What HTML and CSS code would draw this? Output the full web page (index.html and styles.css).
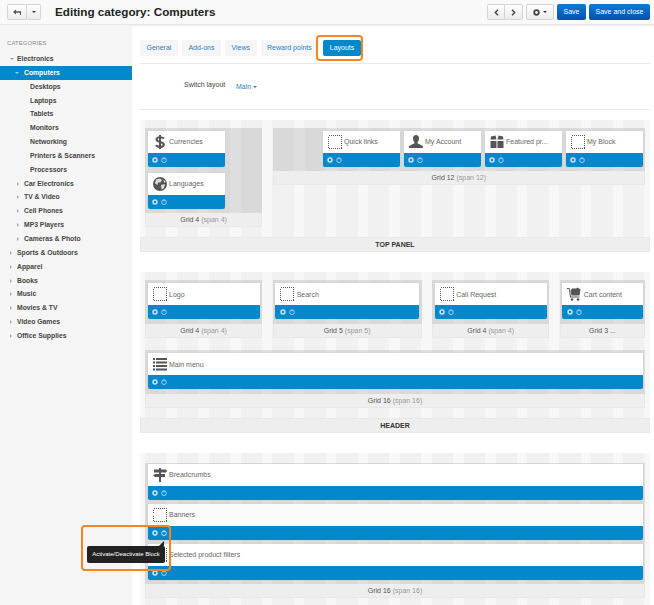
FILE: index.html
```html
<!DOCTYPE html>
<html lang="en">
<head>
    <meta charset="UTF-8">
    <meta name="viewport" content="width=device-width, initial-scale=1.0">
    <title>Editing category: Computers</title>
    <link rel="stylesheet" href="styles.css">
</head>
<body>
<svg class="sprite" width="0" height="0">
    <symbol id="i-empty" viewBox="0 0 14 14"><rect x=".5" y=".5" width="13" height="13" fill="none" stroke="#555" stroke-width="1" stroke-dasharray="1 1" shape-rendering="crispEdges"/></symbol>
    <symbol id="i-dollar" viewBox="0 0 14 14"><path d="M11 3.6C10 2.6 8.6 2.2 7 2.2 4.9 2.2 3.5 3.1 3.5 4.6 3.5 7.6 10.8 6.2 10.8 9.5 10.8 11 9.2 11.9 7 11.9 5.3 11.9 3.9 11.3 2.9 10.3" fill="none" stroke="#555" stroke-width="2.1"/><rect x="6" y="0" width="2" height="14" fill="#555"/></symbol>
    <symbol id="i-globe" viewBox="0 0 14 14"><circle cx="7" cy="7" r="7" fill="#555"/><path d="M3 2.5 7 1.5 9 3 7.5 5.5 5 5.5 4.5 8 2 6.5ZM8 8 12 7 11 11 8.5 12.5ZM10.500 2.500 13 5 11 5.500Z" fill="#ddd"/></symbol>
    <symbol id="i-user" viewBox="0 0 14 14"><path d="M7 0C5 0 4 1.500 4 3.500 4 5.200 4.800 6.500 5.500 7.200V8.300L1 10.500C.3 10.900 0 11.500 0 13H14C14 11.500 13.700 10.900 13 10.500L8.500 8.300V7.200C9.200 6.500 10 5.200 10 3.500 10 1.500 9 0 7 0Z" fill="#555"/></symbol>
    <symbol id="i-gift" viewBox="0 0 14 14"><path d="M1 1.500 5.500.5 6.500 4.500H.5ZM7.500 4.500 8.500.5 13 1.500 13.500 4.500ZM.5 6H6.500V13H.5ZM7.500 6H13.500V13H7.500Z" fill="#555"/></symbol>
    <symbol id="i-list" viewBox="0 0 14 14"><path d="M0 1H2V3H0ZM3 1H14V3H3ZM0 4.500H2V6.500H0ZM3 4.500H14V6.500H3ZM0 8H2V10H0ZM3 8H14V10H3ZM0 11.500H2V13.500H0ZM3 11.500H14V13.500H3Z" fill="#555"/></symbol>
    <symbol id="i-cart" viewBox="0 0 14 14"><path d="M0 1H2.500L4 9.500H12.500V10.500H3L1.800 2H0Z" fill="#555"/><path d="M3.500 3.500 5 1.500H9L10.500 .5 13.500 2.500 12.500 8.500H4.500Z" fill="#555"/><circle cx="5" cy="12.500" r="1.300" fill="#555"/><circle cx="11" cy="12.500" r="1.300" fill="#555"/></symbol>
    <symbol id="i-sign" viewBox="0 0 14 14"><path d="M6 0H8V1.500H13L14 3 13 4.500H8V6H12V9H8V14H6V9H2L0 7.500 2 6H6V4.500H1V1.500H6Z" fill="#555"/></symbol>
    <symbol id="i-gear" viewBox="0 0 8 8"><circle cx="4" cy="4" r="2.600" fill="none" stroke="currentColor" stroke-width="2"/></symbol>
    <symbol id="i-power" viewBox="0 0 8 8"><circle cx="4" cy="4.300" r="3.100" fill="none" stroke="currentColor" stroke-width="1"/><path d="M4 .5V3" stroke="currentColor" stroke-width="1"/></symbol>
</svg>

<header class="topbar">
    <div class="btn-group">
        <span class="btn btn-back"><svg width="10" height="7" viewBox="0 0 10 7"><path d="M4 .5 1 3 4 5.500V3.800H8V6H9V2.300H4Z" fill="#555"/></svg></span>
        <span class="btn btn-caret"><i class="caret"></i></span>
    </div>
    <h1>Editing category: Computers</h1>
    <div class="topbar-right">
        <div class="btn-group">
            <span class="btn btn-arrow"><svg width="5" height="7" viewBox="0 0 5 7"><path d="M4 .8 1.300 3.500 4 6.200" fill="none" stroke="#444" stroke-width="1.400"/></svg></span>
            <span class="btn btn-arrow"><svg width="5" height="7" viewBox="0 0 5 7"><path d="M1 .8 3.700 3.500 1 6.200" fill="none" stroke="#444" stroke-width="1.400"/></svg></span>
        </div>
        <span class="btn btn-cog"><svg width="7" height="7" viewBox="0 0 8 8"><use href="#i-gear"/></svg><i class="caret"></i></span>
        <span class="btn-save">Save</span>
        <span class="btn-save btn-save-close">Save and close</span>
    </div>
</header>

<div class="page">
    <aside class="sidebar">
        <h4>Categories</h4>
        <ul class="tree">
            <li class="lvl1"><i class="arr-open"></i>Electronics</li>
            <li class="lvl2 active"><i class="arr-open"></i>Computers</li>
            <li class="lvl3">Desktops</li>
            <li class="lvl3">Laptops</li>
            <li class="lvl3">Tablets</li>
            <li class="lvl3">Monitors</li>
            <li class="lvl3">Networking</li>
            <li class="lvl3">Printers &amp; Scanners</li>
            <li class="lvl3">Processors</li>
            <li class="lvl2"><i class="arr"></i>Car Electronics</li>
            <li class="lvl2"><i class="arr"></i>TV &amp; Video</li>
            <li class="lvl2"><i class="arr"></i>Cell Phones</li>
            <li class="lvl2"><i class="arr"></i>MP3 Players</li>
            <li class="lvl2"><i class="arr"></i>Cameras &amp; Photo</li>
            <li class="lvl1"><i class="arr"></i>Sports &amp; Outdoors</li>
            <li class="lvl1"><i class="arr"></i>Apparel</li>
            <li class="lvl1"><i class="arr"></i>Books</li>
            <li class="lvl1"><i class="arr"></i>Music</li>
            <li class="lvl1"><i class="arr"></i>Movies &amp; TV</li>
            <li class="lvl1"><i class="arr"></i>Video Games</li>
            <li class="lvl1"><i class="arr"></i>Office Supplies</li>
        </ul>
    </aside>

    <main class="content">
        <nav class="tabs">
            <span class="tab">General</span>
            <span class="tab">Add-ons</span>
            <span class="tab">Views</span>
            <span class="tab">Reward points</span>
            <span class="tab tab-active">Layouts</span>
        </nav>
        <div class="switch">
            <span class="switch-label">Switch layout</span>
            <span class="switch-value">Main<i class="caret"></i></span>
        </div>

        <section class="container">
            <div class="rows">
                <div class="grid span4">
                    <div class="grid-body">
                        <div class="block">
                            <div class="block-head"><svg class="ico"><use href="#i-dollar"/></svg><span>Currencies</span></div>
                            <div class="block-bar"><svg><use href="#i-gear"/></svg><svg><use href="#i-power"/></svg></div>
                        </div>
                        <div class="block">
                            <div class="block-head"><svg class="ico"><use href="#i-globe"/></svg><span>Languages</span></div>
                            <div class="block-bar"><svg><use href="#i-gear"/></svg><svg><use href="#i-power"/></svg></div>
                        </div>
                    </div>
                    <div class="grid-foot">Grid 4 <em>(span 4)</em></div>
                </div>
                <div class="grid span12 grid-short">
                    <div class="grid-body grid-body-right">
                        <div class="block">
                            <div class="block-head"><svg class="ico"><use href="#i-empty"/></svg><span>Quick links</span></div>
                            <div class="block-bar"><svg><use href="#i-gear"/></svg><svg><use href="#i-power"/></svg></div>
                        </div>
                        <div class="block">
                            <div class="block-head"><svg class="ico"><use href="#i-user"/></svg><span>My Account</span></div>
                            <div class="block-bar"><svg><use href="#i-gear"/></svg><svg><use href="#i-power"/></svg></div>
                        </div>
                        <div class="block">
                            <div class="block-head"><svg class="ico"><use href="#i-gift"/></svg><span>Featured pr...</span></div>
                            <div class="block-bar"><svg><use href="#i-gear"/></svg><svg><use href="#i-power"/></svg></div>
                        </div>
                        <div class="block">
                            <div class="block-head"><svg class="ico"><use href="#i-empty"/></svg><span>My Block</span></div>
                            <div class="block-bar"><svg><use href="#i-gear"/></svg><svg><use href="#i-power"/></svg></div>
                        </div>
                    </div>
                    <div class="grid-foot">Grid 12 <em>(span 12)</em></div>
                </div>
            </div>
            <div class="container-title">TOP PANEL</div>
        </section>

        <section class="container">
            <div class="rows">
                <div class="grid span4">
                    <div class="grid-body">
                        <div class="block block-full">
                            <div class="block-head"><svg class="ico"><use href="#i-empty"/></svg><span>Logo</span></div>
                            <div class="block-bar"><svg><use href="#i-gear"/></svg><svg><use href="#i-power"/></svg></div>
                        </div>
                    </div>
                    <div class="grid-foot">Grid 4 <em>(span 4)</em></div>
                </div>
                <div class="grid span5">
                    <div class="grid-body">
                        <div class="block block-full">
                            <div class="block-head"><svg class="ico"><use href="#i-empty"/></svg><span>Search</span></div>
                            <div class="block-bar"><svg><use href="#i-gear"/></svg><svg><use href="#i-power"/></svg></div>
                        </div>
                    </div>
                    <div class="grid-foot">Grid 5 <em>(span 5)</em></div>
                </div>
                <div class="grid span4">
                    <div class="grid-body">
                        <div class="block block-full">
                            <div class="block-head"><svg class="ico"><use href="#i-empty"/></svg><span>Call Request</span></div>
                            <div class="block-bar"><svg><use href="#i-gear"/></svg><svg><use href="#i-power"/></svg></div>
                        </div>
                    </div>
                    <div class="grid-foot">Grid 4 <em>(span 4)</em></div>
                </div>
                <div class="grid span3">
                    <div class="grid-body">
                        <div class="block block-full">
                            <div class="block-head"><svg class="ico"><use href="#i-cart"/></svg><span>Cart content</span></div>
                            <div class="block-bar"><svg><use href="#i-gear"/></svg><svg><use href="#i-power"/></svg></div>
                        </div>
                    </div>
                    <div class="grid-foot">Grid 3 ...</div>
                </div>
                <div class="grid span16">
                    <div class="grid-body">
                        <div class="block block-full">
                            <div class="block-head"><svg class="ico"><use href="#i-list"/></svg><span>Main menu</span></div>
                            <div class="block-bar"><svg><use href="#i-gear"/></svg><svg><use href="#i-power"/></svg></div>
                        </div>
                    </div>
                    <div class="grid-foot">Grid 16 <em>(span 16)</em></div>
                </div>
            </div>
            <div class="container-title">HEADER</div>
        </section>

        <section class="container container-last">
            <div class="rows">
                <div class="grid span16">
                    <div class="grid-body">
                        <div class="block block-full">
                            <div class="block-head"><svg class="ico"><use href="#i-sign"/></svg><span>Breadcrumbs</span></div>
                            <div class="block-bar"><svg><use href="#i-gear"/></svg><svg><use href="#i-power"/></svg></div>
                        </div>
                        <div class="block block-full block-hover">
                            <div class="block-head"><svg class="ico"><use href="#i-empty"/></svg><span>Banners</span></div>
                            <div class="block-bar"><svg><use href="#i-gear"/></svg><svg class="on"><use href="#i-power"/></svg></div>
                        </div>
                        <div class="block block-full">
                            <div class="block-head"><svg class="ico"><use href="#i-empty"/></svg><span>Selected product filters</span></div>
                            <div class="block-bar"><svg><use href="#i-gear"/></svg><svg><use href="#i-power"/></svg></div>
                        </div>
                    </div>
                    <div class="grid-foot">Grid 16 <em>(span 16)</em></div>
                </div>
            </div>
        </section>
    </main>
</div>

<!-- callouts drawn over the screenshot -->
<div class="callout callout-tab"></div>
<div class="tooltip">Activate/Deactivate Block</div>
<div class="callout callout-tip"></div>
</body>
</html>
```

FILE: styles.css
```css
*{
    margin: 0;
    padding: 0;
    box-sizing: border-box;
}
html,body{
    width: 654px;
    height: 605px;
    overflow: hidden;
}
body{
    position: relative;
    background: #fff;
    font-family: "Liberation Sans", Arial, sans-serif;
    font-size: 7px;
    color: #555;
}
.sprite{
    position: absolute;
}
ul{
    list-style: none;
}
em{
    font-style: normal;
    color: #999;
}

/* top bar */
.topbar{
    height: 25px;
    padding: 4px 4px 0 7px;
    display: flex;
    align-items: flex-start;
    background: #f9f9f9;
    border-bottom: 1px solid #e6e6e6;
    box-shadow: 0 1px 1px #eee;
}
.topbar h1{
    margin-left: 14px;
    font-size: 11.700px;
    line-height: 16px;
    color: #222;
}
.topbar-right{
    margin-left: auto;
    display: flex;
    gap: 3px;
}
.btn-group{
    display: flex;
}
.btn{
    height: 16px;
    display: flex;
    align-items: center;
    justify-content: center;
    background: linear-gradient(#fdfdfd, #ececec);
    border: 1px solid #d4d4d4;
    border-radius: 2px;
    color: #444;
}
.btn-group .btn:first-child{
    border-radius: 2px 0 0 2px;
}
.btn-group .btn:last-child{
    border-left: 0;
    border-radius: 0 2px 2px 0;
}
.btn-back{
    width: 20px;
}
.btn-caret{
    width: 14px;
}
.btn-arrow{
    width: 18px;
}
.btn-cog{
    width: 28px;
    gap: 3px;
}
.caret{
    display: inline-block;
    width: 0;
    height: 0;
    border-left: 2.500px solid transparent;
    border-right: 2.500px solid transparent;
    border-top: 2.500px solid #333;
}
.btn-save{
    width: 29px;
    height: 16px;
    line-height: 16px;
    text-align: center;
    color: #fff;
    background: linear-gradient(#0a7ad8, #0351ab);
    border-radius: 2px;
}
.btn-save-close{
    width: 61px;
}

/* page */
.page{
    display: flex;
    height: 580px;
}
.sidebar{
    width: 132px;
    flex-shrink: 0;
    padding-top: 14px;
    background: #f5f5f5;
}
.sidebar h4{
    padding-left: 7px;
    font-size: 5.800px;
    font-weight: normal;
    line-height: 8px;
    color: #888;
    text-transform: uppercase;
    letter-spacing: .2px;
}
.tree{
    margin-top: 5px;
}
.tree li{
    position: relative;
    height: 13.850px;
    line-height: 13.850px;
    font-size: 6.800px;
    font-weight: bold;
    color: #444;
}
.lvl1{
    padding-left: 17px;
}
.lvl2{
    padding-left: 24px;
}
.lvl3{
    padding-left: 30px;
}
.tree .active{
    background: #0388cc;
    color: #fff;
}
.arr,.arr-open{
    position: absolute;
    top: 5px;
    width: 0;
    height: 0;
}
.lvl1 i{
    left: 10px;
}
.lvl2 i{
    left: 17px;
}
.arr{
    border-top: 2px solid transparent;
    border-bottom: 2px solid transparent;
    border-left: 2.500px solid #aaa;
}
.arr-open{
    top: 6px;
    left: 8px;
    border-left: 2.500px solid transparent;
    border-right: 2.500px solid transparent;
    border-top: 2.500px solid #999;
}
.lvl2 .arr-open{
    left: 15px;
}
.active .arr-open{
    border-top-color: #9cd0ec;
}

/* tabs */
.content{
    flex: 1;
    padding: 15px 4px 0 8px;
}
.tabs{
    display: flex;
    gap: 4px;
    height: 24px;
    border-bottom: 1px solid #e8e8e8;
}
.tab{
    height: 16px;
    padding: 0 6.500px;
    line-height: 16px;
    background: #f5f5f5;
    border-radius: 2px;
    color: #2b7fbe;
}
.tab-active{
    margin-left: 1px;
    background: #0388cc;
    color: #fff;
}
.switch{
    height: 46px;
    padding: 16px 0 0 44px;
    display: flex;
    align-items: flex-start;
    border-bottom: 1px solid #e8e8e8;
}
.switch-label{
    width: 52px;
    line-height: 9px;
    color: #444;
}
.switch-value{
    margin-top: 2px;
    line-height: 9px;
    color: #2b7fbe;
}
.switch-value .caret{
    margin-left: 2px;
    vertical-align: middle;
    border-top-color: #2b7fbe;
}

/* layout containers */
.container{
    margin-top: 9.500px;
    margin-bottom: 20px;
    padding-top: 8px;
    background: repeating-linear-gradient(90deg, #f7f7f7 0, #f7f7f7 5px, #f1f1f1 5px, #f1f1f1 26.375px, #f7f7f7 26.375px, #f7f7f7 31.875px);
}
.container + .container{
    margin-top: 0;
}
.container-last{
    margin-bottom: 0;
    padding-top: 10px;
    height: 153px;
}
.rows{
    padding: 0 5px 10px;
    display: grid;
    grid-template-columns: repeat(16, 1fr);
    column-gap: 10.500px;
    row-gap: 12.500px;
    align-items: start;
}
.container-last .rows{
    padding-bottom: 0;
}
.span3{
    grid-column: span 3;
}
.span4{
    grid-column: span 4;
}
.span5{
    grid-column: span 5;
}
.span12{
    grid-column: span 12;
}
.span16{
    grid-column: span 16;
}
.grid-body{
    padding: 3px 2.500px 4.500px;
    display: flex;
    flex-direction: column;
    gap: 6px;
    background: repeating-linear-gradient(90deg, #d9d9d9 0, #d9d9d9 21px, #dedede 21px, #dedede 31.875px);
}
.grid-body-right{
    flex-direction: row;
    justify-content: flex-end;
    gap: 4px;
}
.container-last .grid-body{
    padding-top: 1px;
    gap: 4px;
}
.grid-foot{
    height: 14px;
    line-height: 14px;
    text-align: center;
    background: #eee;
    border: 1px solid #e8e8e8;
    border-top: 0;
    color: #555;
}
.block{
    width: 77px;
    box-shadow: 0 0 1px #aaa;
    border-radius: 2px;
}
.block-full{
    width: 100%;
}
.block-head{
    height: 22px;
    padding-left: 5px;
    display: flex;
    align-items: center;
    gap: 2.500px;
    background: #fff;
    color: #666;
    white-space: nowrap;
}
.block-hover .block-head{
    background: #fafafa;
}
.ico{
    width: 14px;
    height: 14px;
    flex-shrink: 0;
}
.block-bar{
    height: 14px;
    padding-left: 4.500px;
    display: flex;
    align-items: center;
    gap: 3px;
    background: #0388cc;
    border-radius: 0 0 2px 2px;
    color: #c9e6f6;
}
.block-bar svg{
    width: 6px;
    height: 6px;
}
.block-bar .on{
    color: #fff;
}
.container-title{
    height: 15px;
    line-height: 14px;
    text-align: center;
    font-size: 7px;
    font-weight: bold;
    color: #333;
    background: #eee;
    border: 1px solid #e8e8e8;
}

/* overlays */
.callout{
    position: absolute;
    border: 2.500px solid #f7851d;
    border-radius: 4px;
}
.callout-tab{
    left: 316px;
    top: 35px;
    width: 47px;
    height: 26px;
}
.callout-tip{
    left: 81px;
    top: 525px;
    width: 90px;
    height: 46px;
}
.tooltip{
    position: absolute;
    left: 87px;
    top: 546px;
    width: 78px;
    height: 17px;
    line-height: 17px;
    text-align: center;
    font-size: 6px;
    color: #fff;
    background: #222;
    border-radius: 2px;
}
.tooltip::before{
    content: "";
    position: absolute;
    right: 1px;
    top: -5px;
    border-left: 5px solid transparent;
    border-bottom: 5px solid #222;
}
```
